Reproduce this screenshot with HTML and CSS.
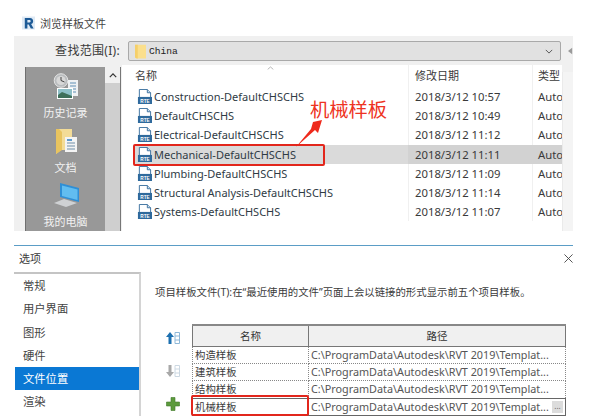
FILE: index.html
```html
<!DOCTYPE html>
<html lang="zh-CN">
<head>
<meta charset="utf-8">
<title>浏览样板文件</title>
<link rel="stylesheet" href="styles.css">
</head>
<body>
<svg class="defs" width="0" height="0" aria-hidden="true">
  <symbol id="rte" viewBox="0 0 16 16">
    <path d="M2.500 .5H11L14.500 4V9H2.500Z" fill="#fff" stroke="#3a6f9e"/>
    <path d="M11 .5V4H14.500" fill="#cfe0ee" stroke="#3a6f9e"/>
    <rect x="1" y="8.500" width="15" height="7.500" fill="#2f6a9c"/>
    <text x="8.500" y="15" text-anchor="middle" class="rte-text">RTE</text>
  </symbol>
</svg>

<header class="app-title">
  <svg class="logo" viewBox="0 0 14 14"><rect width="14" height="14" fill="#dfeaf5"/><path d="M3 1.500H8.500C11 1.500 12 3 12 5C12 6.800 11 7.800 9.800 8.200L12.500 13H9.500L7.200 8.500H5.800V13H3Z M5.800 3.800V6.400H8C8.900 6.400 9.300 5.800 9.300 5.100C9.300 4.400 8.900 3.800 8 3.800Z" fill="#1d5a96" fill-rule="evenodd"/></svg>
  <span>浏览样板文件</span>
</header>

<section class="browser">
  <div class="look-row">
    <label class="look-label">查找范围(I):</label>
    <div class="combo">
      <svg class="folder" viewBox="0 0 12 15"><path d="M0 0H12V15H2L0 14Z" fill="#fbdf8c"/><path d="M0 0H3V15H2L0 14Z" fill="#f5cf6a"/></svg>
      <span class="combo-text">China</span>
      <svg class="chev" viewBox="0 0 10 6"><path d="M1 1L5 5L9 1" fill="none" stroke="#555" stroke-width="1.200"/></svg>
    </div>
    <svg class="back" viewBox="0 0 6 8"><path d="M5 0V8L0 4Z" fill="#9a9a9a"/></svg>
  </div>
  <div class="browser-body">
    <nav class="places">
      <div class="place">
        <svg class="place-icon" viewBox="0 0 28 28">
          <circle cx="9" cy="7.500" r="6.800" fill="#b9bcbe" stroke="#e4e4e4"/><circle cx="9" cy="7.500" r="4.600" fill="#d8d8d8"/><path d="M9 4V7.500L12.500 9" fill="none" stroke="#444"/>
          <rect x="16" y="7" width="10" height="16" fill="#eef1f3"/><path d="M18 10H24M18 13H24M18 16H24M18 19H24" stroke="#5f8fb5"/>
          <rect x="5" y="15" width="16" height="11" fill="#fff"/><rect x="6" y="16" width="14" height="9" fill="#8fc0c8"/><path d="M6 22L10 19L20 23V25H6Z" fill="#3f6f5a"/>
        </svg>
        <span>历史记录</span>
      </div>
      <div class="place">
        <svg class="place-icon" viewBox="0 0 28 28">
          <path d="M4 1H20V22H9L4 26Z" fill="#f3dc97"/><path d="M4 1H7L10 4V22L4 26Z" fill="#e9c45f"/>
          <rect x="13" y="9" width="12" height="15" fill="#f4f4f4"/><path d="M15 12H20" stroke="#2f7fc0" stroke-width="1.500"/><path d="M15 15H23M15 18H23M15 21H23" stroke="#6f8ea8"/>
        </svg>
        <span>文档</span>
      </div>
      <div class="place">
        <svg class="place-icon" viewBox="0 0 28 28">
          <path d="M8 1L27 6V20L8 15Z" fill="#2f8fd6"/><path d="M10 3.500L25.500 7.500V18L10 14Z" fill="#62bdf0"/>
          <path d="M2 21L12 17L25 21L14 25Z" fill="#cfd1d3"/>
        </svg>
        <span>我的电脑</span>
      </div>
    </nav>
    <div class="places-scroll"><div class="scroll-btn"><svg class="up" viewBox="0 0 10 6"><path d="M1 5L5 1L9 5" fill="none" stroke="#333" stroke-width="1.500"/></svg></div></div>
    <div class="files">
      <div class="files-head">
        <div class="col-name">名称<svg class="sort" viewBox="0 0 10 5"><path d="M1 4.500L5 1L9 4.500" fill="none" stroke="#999"/></svg></div>
        <div class="col-date">修改日期</div>
        <div class="col-type">类型</div>
      </div>
      <div class="file"><div class="col-name"><svg class="rte"><use href="#rte"/></svg>Construction-DefaultCHSCHS</div><div class="col-date">2018/3/12 10:57</div><div class="col-type">Auto</div></div>
      <div class="file"><div class="col-name"><svg class="rte"><use href="#rte"/></svg>DefaultCHSCHS</div><div class="col-date">2018/3/12 10:49</div><div class="col-type">Auto</div></div>
      <div class="file"><div class="col-name"><svg class="rte"><use href="#rte"/></svg>Electrical-DefaultCHSCHS</div><div class="col-date">2018/3/12 11:12</div><div class="col-type">Auto</div></div>
      <div class="file selected"><div class="col-name"><svg class="rte"><use href="#rte"/></svg>Mechanical-DefaultCHSCHS<span class="red-frame"></span></div><div class="col-date">2018/3/12 11:11</div><div class="col-type">Auto</div></div>
      <div class="file"><div class="col-name"><svg class="rte"><use href="#rte"/></svg>Plumbing-DefaultCHSCHS</div><div class="col-date">2018/3/12 11:09</div><div class="col-type">Auto</div></div>
      <div class="file"><div class="col-name"><svg class="rte"><use href="#rte"/></svg>Structural Analysis-DefaultCHSCHS</div><div class="col-date">2018/3/12 11:14</div><div class="col-type">Auto</div></div>
      <div class="file"><div class="col-name"><svg class="rte"><use href="#rte"/></svg>Systems-DefaultCHSCHS</div><div class="col-date">2018/3/12 11:07</div><div class="col-type">Auto</div></div>
      <div class="callout">机械样板</div>
      <svg class="arrow" viewBox="0 0 35 35"><path d="M6 32L21 14L23 7L32 5L28 18L25 15Z" fill="#ee2a1c"/></svg>
    </div>
    <div class="files-scroll"></div>
  </div>
</section>

<section class="options">
  <div class="options-title"><span>选项</span><svg class="close" viewBox="0 0 10 10"><path d="M.5 .5L9.500 9.500M9.500 .5L.5 9.500" stroke="#444" fill="none"/></svg></div>
  <div class="options-body">
    <ul class="tabs">
      <li>常规</li>
      <li>用户界面</li>
      <li>图形</li>
      <li>硬件</li>
      <li class="active">文件位置</li>
      <li>渲染</li>
    </ul>
    <div class="panel">
      <p class="hint">项目样板文件(T):在“最近使用的文件”页面上会以链接的形式显示前五个项目样板。</p>
      <div class="table-row">
        <div class="tools">
          <svg class="tool" viewBox="0 0 14 14"><path d="M4 1L8 6H5.500V13H2.500V6H0Z" fill="#1d70b0"/><path d="M9 1.500H13.500V12.500H9ZM9 5H13.500M9 9H13.500" fill="#fff" stroke="#8fb8d8"/></svg>
          <svg class="tool" viewBox="0 0 14 14"><path d="M4 13L8 8H5.500V1H2.500V8H0Z" fill="#a8a8a8"/><path d="M9 1.500H13.500V12.500H9ZM9 5H13.500M9 9H13.500" fill="#fff" stroke="#ccd8e2"/></svg>
          <svg class="tool" viewBox="0 0 14 14"><path d="M5 .5H9V5H13.500V9H9V13.500H5V9H.5V5H5Z" fill="#5c9a3c" stroke="#3f7a2a" stroke-width=".6"/></svg>
        </div>
        <table class="templates">
          <thead><tr><th class="t-name">名称</th><th>路径</th></tr></thead>
          <tbody>
            <tr><td>构造样板</td><td class="path">C:\ProgramData\Autodesk\RVT 2019\Templat...</td></tr>
            <tr><td>建筑样板</td><td class="path">C:\ProgramData\Autodesk\RVT 2019\Templat...</td></tr>
            <tr><td>结构样板</td><td class="path">C:\ProgramData\Autodesk\RVT 2019\Templat...</td></tr>
            <tr class="current"><td class="framed">机械样板<span class="red-frame-2"></span></td><td class="path">C:\ProgramData\Autodesk\RVT 2019\Templat...<span class="browse">...</span></td></tr>
          </tbody>
        </table>
      </div>
    </div>
  </div>
</section>
</body>
</html>
```
FILE: styles.css
```css
* { box-sizing: border-box; }
html, body { margin: 0; padding: 0; }
body {
  width: 602px;
  height: 420px;
  overflow: hidden;
  background: #fff;
  color: #3a3a3a;
  font-family: "Noto Sans", "Noto Sans CJK SC", sans-serif;
  font-size: 11.3px;
}
.defs { position: absolute; }
.rte-text { font: 700 5px "Liberation Sans", sans-serif; fill: #fff; }

.app-title {
  height: 36px;
  display: flex;
  align-items: center;
  gap: 5px;
  padding: 9px 0 0 22px;
  font-size: 11px;
  color: #444;
}
.logo { width: 13px; height: 14px; }

.browser {
  width: 559px;
  height: 195px;
  margin-left: 14px;
  background: #f0f0f0;
  display: flex;
  flex-direction: column;
}
.look-row {
  height: 31px;
  padding-top: 5px;
  display: flex;
  align-items: flex-start;
}
.look-label {
  width: 106px;
  margin-top: 1px;
  text-align: right;
  font-size: 12px;
  letter-spacing: .3px;
  line-height: 18px;
  white-space: nowrap;
}
.combo {
  width: 433px;
  height: 20px;
  margin-left: 8px;
  display: flex;
  align-items: center;
  padding: 0 7px 0 6px;
  background: #e1e1e1;
  border: 1px solid #a9a9a9;
  border-radius: 2px;
}
.folder { width: 11px; height: 15px; }
.combo-text {
  margin-left: 3px;
  flex: 1;
  color: #222;
  font: 9.6px "Liberation Mono", monospace;
}
.chev { width: 8px; height: 5px; }
.back { width: 5px; height: 8px; margin: 6px 0 0 7px; }

.browser-body { flex: 1; display: flex; padding-left: 11px; min-height: 0; }
.places {
  width: 80px;
  background: #989898;
  border-left: 1px solid #6f6f6f;
  display: flex;
  flex-direction: column;
  align-items: center;
  padding-top: 6px;
  color: #f2f2f2;
  font-size: 11px;
}
.place { flex: none; height: 54.5px; display: flex; flex-direction: column; align-items: center; }
.place span { line-height: 16px; margin-top: 4px; }
.place-icon { width: 28px; height: 28px; flex: none; }
.places-scroll {
  width: 16px;
  background: #cfcfcf;
  border-right: 1px solid #777;
}
.scroll-btn {
  height: 16px;
  background: #f0f0f0;
  display: flex;
  justify-content: center;
  align-items: center;
}
.up { width: 8px; height: 5px; }
.files {
  width: 440px;
  margin: -2px 0 0 1px;
  padding-left: 12px;
  background: #fff;
  position: relative;
}
.files-head, .file { display: flex; }
.files-head { height: 22px; line-height: 22px; font-size: 11px; }
.file { height: 19.2px; line-height: 19.2px; }
.col-name {
  width: 274px;
  display: flex;
  align-items: center;
  white-space: nowrap;
  position: relative;
}
.col-date {
  width: 124px;
  padding-left: 6px;
  border-left: 1px solid #f0f0f0;
}
.col-type {
  width: 30px;
  padding-left: 5px;
  border-left: 1px solid #f0f0f0;
  overflow: hidden;
}
.files-head .col-name { padding-left: 1px; }
.sort { position: absolute; left: 133px; top: 1px; width: 7px; height: 4px; }
.file .col-name { font-size: 11px; color: #2f3b45; }
.rte { width: 15px; height: 15px; margin: 0 2px 0 3px; flex: none; }
.selected { background: #d2d2d2; }
.selected .col-name { background: #dadada; }
.selected .col-date, .selected .col-type { border-left-color: #d2d2d2; }
.red-frame {
  position: absolute;
  left: -1px;
  top: -1px;
  width: 192px;
  height: 22px;
  border: 2px solid #e2261c;
  border-radius: 2px;
}
.callout {
  position: absolute;
  left: 188px;
  top: 33px;
  color: #ee3322;
  font-size: 19.3px;
  line-height: 24px;
}
.arrow { position: absolute; left: 168px; top: 50px; width: 35px; height: 35px; }
.files-scroll { width: 11px; margin-top: 5px; background: #f4f4f4; border-left: 1px solid #eaeaea; }

.options { margin: 14px 29px 0 14px; border-top: 1px solid #5b9dc6; }
.options-title {
  height: 26px;
  display: flex;
  justify-content: space-between;
  align-items: center;
  padding: 0 0 2px 5px;
  font-size: 11px;
}
.close { width: 9px; height: 9px; }
.options-body { display: flex; }
.tabs {
  list-style: none;
  margin: 0;
  padding: 0 0 0 1px;
  width: 127px;
  height: 144px;
  border-top: 2px solid #c4c4c4;
  border-right: 2px solid #d4d4d4;
}
.tabs li {
  height: 23.3px;
  line-height: 23.3px;
  padding-left: 8px;
  font-size: 11.3px;
  color: #444;
}
.tabs .active { background: #0a78d4; color: #fff; }
.panel { flex: 1; padding: 11px 0 0 14px; }
.hint { margin: 0; font-size: 10.4px; line-height: 18px; white-space: nowrap; }
.table-row { display: flex; margin-top: 23px; }
.tools { width: 37px; display: flex; flex-direction: column; gap: 19px; padding: 7px 0 0 11px; }
.tool { width: 14px; height: 14px; }
.templates {
  border-collapse: collapse;
  width: 374px;
  table-layout: fixed;
  font-size: 10.8px;
}
.templates th {
  height: 21px;
  background: #f0f0f0;
  border: 1px solid #777;
  border-top: 2px solid #888;
  font-weight: 400;
  font-size: 10.5px;
  color: #333;
  padding: 0;
}
.t-name { width: 116px; }
.templates td {
  height: 17.4px;
  padding: 0 0 0 2px;
  border: 1px dotted #888;
  white-space: nowrap;
  overflow: hidden;
  line-height: 16px;
  position: relative;
}
.templates td:first-child { font-size: 10.4px; }
.path { color: #555; }
.current td { border: 1px solid #666; }
.framed { overflow: visible !important; }
.red-frame-2 {
  position: absolute;
  left: -2px;
  top: -4px;
  width: 118px;
  height: 21px;
  border: 2px solid #e2261c;
  border-radius: 2px;
}
.browse {
  position: absolute;
  right: 2px;
  top: 2px;
  width: 11px;
  height: 12px;
  background: #dcdcdc;
  color: #666;
  font-size: 8px;
  line-height: 9px;
  text-align: center;
}
```
